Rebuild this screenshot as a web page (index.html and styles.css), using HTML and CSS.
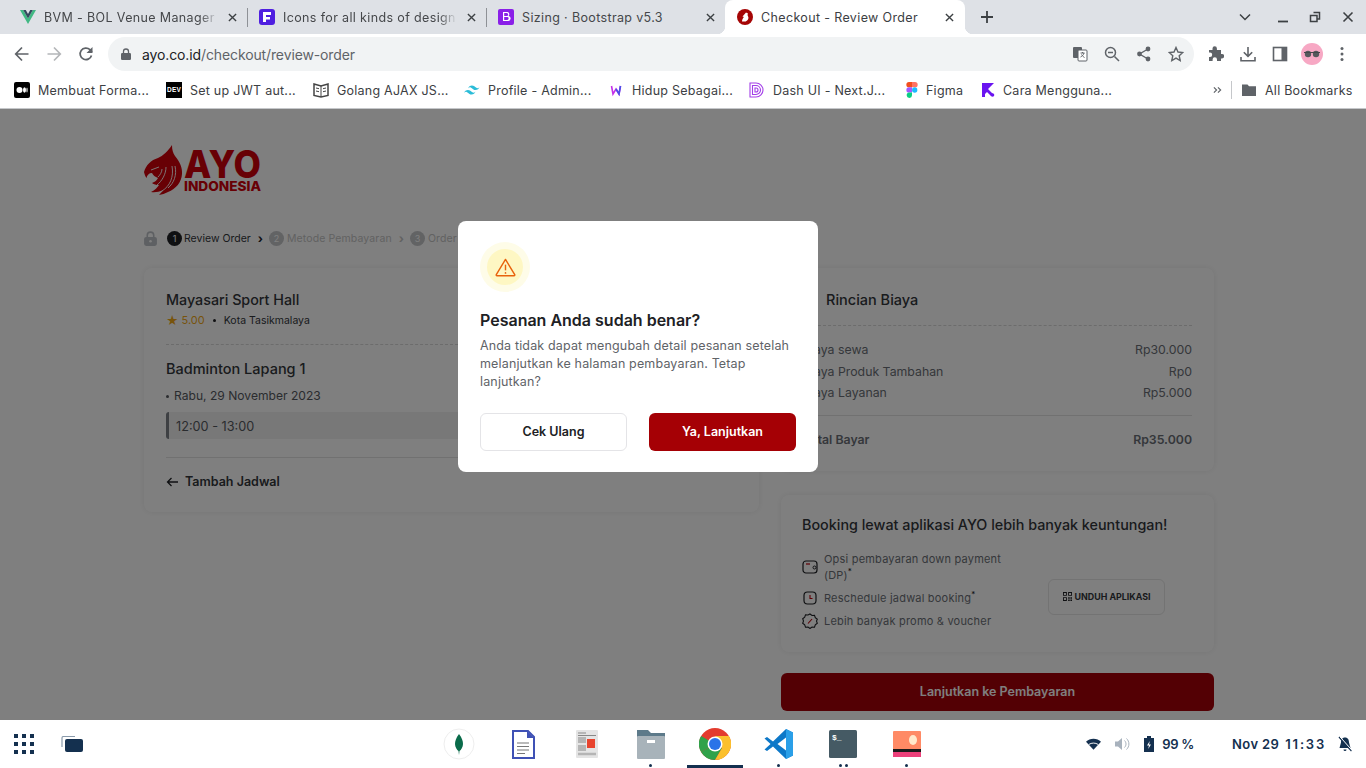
FILE: index.html
```html
<!DOCTYPE html>
<html lang="id">
<head>
<meta charset="utf-8">
<title>Checkout - Review Order</title>
<link rel="stylesheet" href="styles.css">
</head>
<body>
<div class="screen">
  <header class="tabbar">
    <div class="tab">
      <svg class="fav" viewBox="0 0 16 16"><path d="M0 1h3.200L8 9.500 12.800 1H16L8 15z" fill="#41b883"/><path d="M3.200 1h2.600L8 5l2.200-4h2.600L8 9.500z" fill="#35495e"/></svg>
      <span class="tab-title">BVM - BOL Venue Manager</span><svg class="x" viewBox="0 0 10 10"><path d="M1 1l8 8M9 1L1 9" stroke="#3c4043" stroke-width="1.500"/></svg>
    </div>
    <div class="tab sep">
      <svg class="fav" viewBox="0 0 16 16"><rect width="16" height="16" rx="3" fill="#4f1fe0"/><path d="M4 3h8v3H7v2h4v2.600H7V13H4z" fill="#fff"/></svg>
      <span class="tab-title">Icons for all kinds of design</span><svg class="x" viewBox="0 0 10 10"><path d="M1 1l8 8M9 1L1 9" stroke="#3c4043" stroke-width="1.500"/></svg>
    </div>
    <div class="tab sep">
      <svg class="fav" viewBox="0 0 16 16"><rect width="16" height="16" rx="2" fill="#8a1fe8"/><path d="M5 3h4a2.200 2.200 0 0 1 1.500 3.900A2.500 2.500 0 0 1 9.500 12H5zM6.200 4.100v3h2.500a1.500 1.500 0 0 0 0-3zm0 4v2.900h3a1.450 1.450 0 0 0 0-2.900z" fill="#fff"/></svg>
      <span class="tab-title plain">Sizing · Bootstrap v5.3</span><svg class="x" viewBox="0 0 10 10"><path d="M1 1l8 8M9 1L1 9" stroke="#3c4043" stroke-width="1.500"/></svg>
    </div>
    <div class="tab active">
      <svg class="fav" viewBox="0 0 16 16"><circle cx="8" cy="8" r="8" fill="#a50505"/><path d="M5 12.500c0-2 1-3.500 2-4.500L5.500 7.500 9 3.500l2 1-.5 1.500.8 2C12 10 10 12.500 8 12.500z" fill="#fff"/></svg>
      <span class="tab-title plain">Checkout - Review Order</span><svg class="x" viewBox="0 0 10 10"><path d="M1 1l8 8M9 1L1 9" stroke="#3c4043" stroke-width="1.500"/></svg>
    </div>
    <svg class="newtab" viewBox="0 0 14 14"><path d="M7 1v12M1 7h12" stroke="#3c4043" stroke-width="1.800" fill="none"/></svg>
    <div class="win">
      <svg viewBox="0 0 12 12" class="w w1"><path d="M1 3.500l5 5 5-5" stroke="#3c4043" stroke-width="1.500" fill="none"/></svg>
      <svg viewBox="0 0 12 12" class="w w2"><path d="M1 10.500h10" stroke="#3c4043" stroke-width="1.800" fill="none"/></svg>
      <svg viewBox="0 0 12 12" class="w w3"><path d="M4.500 1.500h6V8H8.500M1.500 4.500H8v6H1.500z" stroke="#3c4043" stroke-width="1.500" fill="none"/></svg>
      <svg viewBox="0 0 12 12" class="w w4"><path d="M1.500 1.500l9 9M10.500 1.500l-9 9" stroke="#3c4043" stroke-width="1.600" fill="none"/></svg>
    </div>
  </header>

  <nav class="toolbar">
    <svg class="nav" viewBox="0 0 16 16"><path d="M14.500 8H2M8 1.500L1.700 8 8 14.500" stroke="#5f6368" stroke-width="1.700" fill="none"/></svg>
    <svg class="nav" viewBox="0 0 16 16"><path d="M1.500 8H14M8 1.500L14.300 8 8 14.500" stroke="#b4b6b9" stroke-width="1.700" fill="none"/></svg>
    <svg class="nav" viewBox="0 0 16 16"><path d="M13.500 9.500A5.800 5.800 0 1 1 12 3.700L14 6" stroke="#5f6368" stroke-width="1.700" fill="none"/><path d="M14.500 1v6h-6z" fill="#5f6368"/></svg>
    <div class="omnibox">
      <svg class="lock" viewBox="0 0 10 12"><rect y="5" width="10" height="7" rx="1.200" fill="#5f6368"/><path d="M2.500 5.500V3.500a2.500 2.500 0 0 1 5 0v2" stroke="#5f6368" stroke-width="1.300" fill="none"/></svg>
      <span class="url"><span class="host">ayo.co.id</span>/checkout/review-order</span>
      <span class="omni-icons">
        <svg class="oi" viewBox="0 0 16 16"><rect x="1" y="1" width="9" height="11" rx="1" fill="#5f6368"/><rect x="6" y="4" width="9" height="11" rx="1" fill="#fff" stroke="#5f6368"/><path d="M8.500 7h4M10.500 6v1M12 7c-.5 2-2 3.500-3.500 4M9.500 8.500c.5 1 2 2.500 3 3" stroke="#5f6368" fill="none"/></svg>
        <svg class="oi" viewBox="0 0 16 16"><circle cx="6.500" cy="6.500" r="5" stroke="#5f6368" stroke-width="1.500" fill="none"/><path d="M10.500 10.500L15 15M4 6.500h5" stroke="#5f6368" stroke-width="1.500" fill="none"/></svg>
        <svg class="oi" viewBox="0 0 16 16"><circle cx="12" cy="3" r="2.400" fill="#5f6368"/><circle cx="12" cy="13" r="2.400" fill="#5f6368"/><circle cx="3.500" cy="8" r="2.400" fill="#5f6368"/><path d="M12 3L3.500 8l8.500 5" stroke="#5f6368" stroke-width="1.400" fill="none"/></svg>
        <svg class="oi" viewBox="0 0 16 16"><path d="M8 1.500l2 4.500 4.800.5-3.600 3.200 1 4.800L8 12.100l-4.200 2.400 1-4.800L1.200 6.500 6 6z" stroke="#5f6368" stroke-width="1.400" fill="none"/></svg>
      </span>
    </div>
    <div class="ext">
      <svg class="e" viewBox="0 0 16 16"><path d="M1 5h3.500V3.500a2.200 2.200 0 0 1 4.400 0V5H13v4h1a2.200 2.200 0 0 1 0 4.400h-1V16H9v-1.500a2.200 2.200 0 0 0-4.400 0V16H1v-4h1a2.200 2.200 0 0 0 0-4.400H1z" transform="translate(0 -1)" fill="#5f6368"/></svg>
      <svg class="e" viewBox="0 0 16 16"><path d="M8 1v9M3.800 6.200L8 10.400l4.200-4.200M1 11v3.800h14V11" stroke="#5f6368" stroke-width="1.600" fill="none"/></svg>
      <svg class="e" viewBox="0 0 16 16"><rect x="1.500" y="1.500" width="13" height="13" stroke="#5f6368" stroke-width="1.600" fill="none"/><rect x="9.500" y="1.500" width="5" height="13" fill="#5f6368"/></svg>
      <svg class="avatar" viewBox="0 0 22 22"><circle cx="11" cy="11" r="11" fill="#f7a8c4"/><circle cx="7" cy="11" r="3.200" fill="#55585c"/><circle cx="15" cy="11" r="3.200" fill="#55585c"/><path d="M3 9.500h16" stroke="#45474a"/></svg>
      <svg class="e dots" viewBox="0 0 4 16"><circle cx="2" cy="2.500" r="1.500" fill="#5f6368"/><circle cx="2" cy="8" r="1.500" fill="#5f6368"/><circle cx="2" cy="13.500" r="1.500" fill="#5f6368"/></svg>
    </div>
  </nav>

  <div class="bookmarks">
    <a class="bm m1"><svg class="bi" viewBox="0 0 16 16"><rect width="16" height="16" rx="2" fill="#000"/><circle cx="5.500" cy="8" r="3" fill="#fff"/><ellipse cx="10.500" cy="8" rx="1.500" ry="2.800" fill="#fff"/><ellipse cx="13" cy="8" rx=".6" ry="2.500" fill="#fff"/></svg>Membuat Forma...</a>
    <a class="bm m2"><span class="dev">DEV</span>Set up JWT aut...</a>
    <a class="bm m3"><svg class="bi" viewBox="0 0 16 16"><path d="M1 2l7 2 7-2v11.500L8 15l-7-1.500z" fill="none" stroke="#444" stroke-width="1.500"/><path d="M8 4v11M3 6l3 .7M3 9l3 .7M10 6.700l3-.7M10 9.700l3-.7" stroke="#444"/></svg>Golang AJAX JS...</a>
    <a class="bm m4"><svg class="bi" viewBox="0 0 16 16"><path d="M8 3.500c-2 0-3.300 1-4 3 .8-1 1.700-1.400 2.700-1.100.6.100 1 .6 1.500 1 .8.800 1.600 1.600 3.300 1.600 2 0 3.300-1 4-3-.8 1-1.700 1.400-2.700 1.100-.6-.1-1-.6-1.500-1C10.500 4.300 9.700 3.500 8 3.500zM4 8c-2 0-3.300 1-4 3 .8-1 1.700-1.400 2.700-1.100.6.100 1 .6 1.500 1 .8.800 1.600 1.600 3.300 1.600 2 0 3.300-1 4-3-.8 1-1.700 1.400-2.700 1.100-.6-.1-1-.6-1.500-1C6.500 8.800 5.700 8 4 8z" fill="#2bbcd8"/></svg>Profile - Admin...</a>
    <a class="bm m5"><svg class="bi" viewBox="0 0 16 16"><path d="M3.500 4l1.500 8 3-5 3 5 1.500-8" stroke="#c42fe8" stroke-width="1.600" fill="none"/><path d="M8 7l3 5 1.500-8" stroke="#4a4fe8" stroke-width="1.600" fill="none"/></svg>Hidup Sebagai...</a>
    <a class="bm m6"><svg class="bi" viewBox="0 0 16 16"><path d="M1 1h6a7 7 0 0 1 0 14H1zM3.500 3.500h3.500a4.500 4.500 0 0 1 0 9H3.500zM6 6h1a2 2 0 0 1 0 4H6z" fill="none" stroke="#a33fe8" stroke-width="1.100"/></svg>Dash UI - Next.J...</a>
    <a class="bm m7"><svg class="bi" viewBox="0 0 16 16"><path d="M5 0h3v5.300H5A2.650 2.650 0 0 1 5 0z" fill="#f24e1e"/><path d="M8 0h3a2.650 2.650 0 0 1 0 5.300H8z" fill="#ff7262"/><path d="M5 5.300h3v5.300H5a2.650 2.650 0 0 1 0-5.300z" fill="#a259ff"/><circle cx="10.700" cy="8" r="2.650" fill="#1abcfe"/><path d="M5 10.600h3v2.700a2.650 2.650 0 1 1-3-2.700z" fill="#0acf83"/></svg>Figma</a>
    <a class="bm m8"><svg class="bi" viewBox="0 0 16 16"><path d="M2 1h12L8 7l5 5-2 2-4-4-2 2v3H2z" fill="#6a14f0"/><circle cx="12.500" cy="13" r="1.800" fill="#6a14f0"/></svg>Cara Mengguna...</a>
    <svg class="more" viewBox="0 0 10 8"><path d="M1 1l3 3-3 3M5.500 1l3 3-3 3" stroke="#5f6368" stroke-width="1.300" fill="none"/></svg>
    <span class="bm-sep"></span>
    <a class="bm all"><svg class="bi" viewBox="0 0 16 16"><path d="M1 2.500h5.500l1.500 1.700h7V14H1z" fill="#5f6368"/></svg>All Bookmarks</a>
  </div>

  <main class="page">
    <svg class="logo" viewBox="0 0 118 50" aria-label="AYO Indonesia">
      <path d="M0 27C2 20 7 15 14 13 19 11 24 6 28 0c0 5 1 8 3 11 5 6 7.500 12 7 18-.5 8-6 15-14 18-3 1.500-6 2.500-9 3 2-2 3.500-3.500 4-5-4 2-8 2.500-12 2 4-2 6.500-4.500 8-7-3 0-5-.5-7-2 3-1 5-3 6-5-3-1-5-3-6-5-3 0-5 2-5.500 5C1 31 .5 29 0 27z" fill="#d0000a"/>
      <path d="M7 25l8-3M18 46c8-5 12-14 10-25M24 43c6-5 9-13 7-22M13 40c5-4 9-11 9-18M14 32c2-2 4-5 4-8" stroke="#fff" stroke-width=".9" fill="none"/>
      <text x="40" y="33" class="logo-a" textLength="77" lengthAdjust="spacingAndGlyphs">AYO</text>
      <text x="40" y="46" class="logo-b" textLength="77" lengthAdjust="spacingAndGlyphs">INDONESIA</text>
    </svg>

    <div class="steps">
      <svg class="step-lock" viewBox="0 0 12 14"><rect y="5.500" width="12" height="8.500" rx="2" fill="#bcc0c6"/><path d="M3 6V4a3 3 0 0 1 6 0v2" stroke="#bcc0c6" stroke-width="1.500" fill="none"/><circle cx="6" cy="9.500" r="1.200" fill="#fff"/></svg>
      <span class="step on"><b class="num">1</b>Review Order</span><span class="chev on">›</span>
      <span class="step"><b class="num">2</b>Metode Pembayaran</span><span class="chev">›</span>
      <span class="step"><b class="num">3</b>Order Selesai</span>
    </div>

    <div class="columns">
      <section class="card left">
        <h2 class="venue">Mayasari Sport Hall</h2>
        <div class="meta"><span class="star">★</span><span class="rating">5.00</span><i class="dot"></i><span>Kota Tasikmalaya</span></div>
        <hr class="dash">
        <h3 class="court">Badminton Lapang 1</h3>
        <div class="date"><i class="bullet"></i>Rabu, 29 November 2023</div>
        <div class="slot">12:00 - 13:00</div>
        <hr class="solid">
        <div class="addmore"><svg class="arrow" viewBox="0 0 12 10"><path d="M12 5H1.500M5.500 1L1.500 5l4 4" stroke="#1f2125" stroke-width="1.300" fill="none"/></svg>Tambah Jadwal</div>
      </section>

      <aside class="right">
        <section class="card cost">
          <h2 class="cost-title">Rincian Biaya</h2>
          <hr class="dash first">
          <div class="row"><span>Biaya sewa</span><span>Rp30.000</span></div>
          <div class="row"><span>Biaya Produk Tambahan</span><span>Rp0</span></div>
          <div class="row"><span>Biaya Layanan</span><span>Rp5.000</span></div>
          <hr class="solid second">
          <div class="row total"><span>Total Bayar</span><span>Rp35.000</span></div>
        </section>

        <section class="card promo">
          <h3 class="promo-title">Booking lewat aplikasi AYO lebih banyak keuntungan!</h3>
          <div class="promo-body">
            <ul class="perks">
              <li><svg class="pi" viewBox="0 0 16 16"><rect x="1" y="2" width="14" height="12" rx="3" fill="none" stroke="#1f2125" stroke-width="1.200"/><path d="M4 5h4" stroke="#c0000a" stroke-width="1.200"/><circle cx="12.500" cy="8.500" r="1.500" fill="none" stroke="#1f2125"/></svg><span>Opsi pembayaran down payment (DP)<sup>*</sup></span></li>
              <li><svg class="pi" viewBox="0 0 16 16"><rect x="2" y="2" width="12" height="12" rx="3.500" fill="none" stroke="#1f2125" stroke-width="1.200"/><path d="M8 5v3.500h2.500" stroke="#c0000a" stroke-width="1.100" fill="none"/></svg><span>Reschedule jadwal booking<sup>*</sup></span></li>
              <li><svg class="pi" viewBox="0 0 16 16"><path d="M8 1l2 1.500 2.500-.2.800 2.400 2 1.500L14.500 8l.8 2.300-2 1.500-.8 2.400-2.500-.2L8 15.500 6 14l-2.500.2-.8-2.400-2-1.500L1.500 8 .7 5.700l2-1.500.8-2.400L6 2z" fill="none" stroke="#1f2125" stroke-width="1.100"/><path d="M10 6l-4 4.500" stroke="#c0000a" stroke-width="1.100"/></svg><span>Lebih banyak promo &amp; voucher</span></li>
            </ul>
            <div class="download"><svg class="qr" viewBox="0 0 10 10"><path d="M0 0h4.300v4.300H0zM1 1v2.300h2.300V1zM5.700 0H10v4.300H5.700zM6.700 1v2.300H9V1zM0 5.700h4.300V10H0zM1 6.700V9h2.300V6.700zM5.700 5.700h1.800v1.800H5.700zM8.200 5.700H10v1.800H8.200zM5.700 8.200h1.800V10H5.700zM8.200 8.200H10V10H8.200z" fill="#1f2125" fill-rule="evenodd"/></svg>UNDUH APLIKASI</div>
          </div>
        </section>

        <button class="pay">Lanjutkan ke Pembayaran</button>
      </aside>
    </div>

    <div class="overlay">
      <div class="modal">
        <div class="halo"><div class="halo-in"><svg class="warn" viewBox="0 0 22 20"><path d="M11 1.500L1.300 17.500a.8.800 0 0 0 .7 1.200h18a.8.800 0 0 0 .7-1.200z" fill="none" stroke="#e8620c" stroke-width="1.500" stroke-linejoin="round"/><path d="M11 7v6" stroke="#e8620c" stroke-width="1.500"/><circle cx="11" cy="15.700" r=".9" fill="#e8620c"/></svg></div></div>
        <h2 class="modal-title">Pesanan Anda sudah benar?</h2>
        <p class="modal-text">Anda tidak dapat mengubah detail pesanan setelah melanjutkan ke halaman pembayaran. Tetap lanjutkan?</p>
        <div class="modal-actions">
          <button class="btn ghost">Cek Ulang</button>
          <button class="btn primary">Ya, Lanjutkan</button>
        </div>
      </div>
    </div>
  </main>

  <footer class="shelf">
    <div class="launch">
      <svg class="grid9" viewBox="0 0 20 20"><g fill="#14304f"><rect width="4" height="4"/><rect x="8" width="4" height="4"/><rect x="16" width="4" height="4"/><rect y="8" width="4" height="4"/><rect x="8" y="8" width="4" height="4"/><rect x="16" y="8" width="4" height="4"/><rect y="16" width="4" height="4"/><rect x="8" y="16" width="4" height="4"/><rect x="16" y="16" width="4" height="4"/></g></svg>
      <svg class="overview" viewBox="0 0 22 16"><path d="M1 11V2a1.500 1.500 0 0 1 1.500-1.500H14" stroke="#8a9aab" fill="none" stroke-width="1.200"/><rect x="4" y="3" width="18" height="13" rx="2" fill="#14304f"/></svg>
    </div>
    <div class="apps">
      <span class="app"><svg class="ai" viewBox="0 0 32 32"><circle cx="16" cy="16" r="15" fill="#fff" stroke="#eee"/><path d="M16 6c3 4 4 7 4 10s-2 6-3.500 7L16 27l-.5-4C14 22 12 19 12 16s1-6 4-10z" fill="#0a6b4a"/></svg></span>
      <span class="app"><svg class="ai" viewBox="0 0 32 32"><path d="M6 3h15l6 6v21H6z" fill="#fff" stroke="#3f51b5" stroke-width="2"/><path d="M20 3l7 7h-7z" fill="#3f51b5"/><path d="M10 15h12M10 18.500h12M10 22h12M10 25.500h8" stroke="#777" stroke-width="1.200"/></svg></span>
      <span class="app"><svg class="ai" viewBox="0 0 32 32"><rect x="5" y="2" width="22" height="28" rx="1" fill="#e4e4e4"/><path d="M7 5h8M7 7.500h18" stroke="#888"/><rect x="7" y="9" width="8" height="6" fill="#b5b5b5"/><rect x="16" y="11" width="8" height="9" fill="#e8442e"/><rect x="7" y="17" width="8" height="6" fill="#b5b5b5"/><path d="M7 26h18" stroke="#b5b5b5" stroke-width="2.500"/></svg></span>
      <span class="app"><svg class="ai" viewBox="0 0 32 32"><path d="M2 2h11l3 3h14v5H2z" fill="#5d7a8a"/><rect x="2" y="8" width="28" height="23" rx="1" fill="#a8b3ba"/><rect x="12" y="12" width="8" height="3" fill="#fff"/></svg><i class="pip"></i></span>
      <span class="app current"><svg class="ai" viewBox="0 0 32 32"><circle cx="16" cy="16" r="16" fill="#e33b2e"/><path d="M16 16L2.100 24A16 16 0 0 0 16 32l7-12z" fill="#2fa24a"/><path d="M2.100 8A16 16 0 0 0 2.100 24L9 20 16 16z" fill="#2fa24a"/><path d="M16 8h13.900A16 16 0 0 1 16 32l7-12z" fill="#fbc02d"/><circle cx="16" cy="16" r="7.500" fill="#fff"/><circle cx="16" cy="16" r="6" fill="#2a73e8"/></svg></span>
      <span class="app"><svg class="ai" viewBox="0 0 32 32"><path d="M23 1l7 3.400v23.200L23 31 10 18.500 4 23l-2.500-1.500 6-5.500-6-5.500L4 9l6 4.500z" fill="#0d78c8"/><path d="M23 1l7 3.400v23.200L23 31z" fill="#2a9fe8"/><path d="M23 9.500L14.500 16l8.500 6.500z" fill="#fff"/></svg><i class="pip"></i></span>
      <span class="app"><svg class="ai" viewBox="0 0 32 32"><rect x="2" y="2" width="28" height="28" rx="1.500" fill="#455a64"/><text x="5" y="12" class="term">$_</text></svg><i class="pip p-a"></i><i class="pip p-b"></i></span>
      <span class="app"><svg class="ai" viewBox="0 0 32 32"><rect x="2" y="3" width="28" height="26" rx="1" fill="#ff8a65"/><rect x="2" y="23" width="28" height="6" fill="#ec407a"/><rect x="2" y="21" width="28" height="3" fill="#1a1a1a"/><ellipse cx="22" cy="12" rx="4" ry="5" fill="#ffe9cc"/></svg><i class="pip"></i></span>
    </div>
    <div class="tray">
      <svg class="t wifi" viewBox="0 0 16 12"><path d="M0 3.500C4-.8 12-.8 16 3.500L8 12z" fill="#14304f"/><path d="M3 6.500c3-2 7-2 10 0" stroke="#fff" fill="none"/></svg>
      <svg class="t vol" viewBox="0 0 16 16"><path d="M1 5.500h3L8 2v12l-4-3.500H1z" fill="#a8b2bd"/><path d="M10.500 4.500c2 2 2 5 0 7M12.500 2.500c3.200 3 3.200 8 0 11" stroke="#a8b2bd" fill="none"/></svg>
      <svg class="t bat" viewBox="0 0 10 16"><path d="M3 0h4v2h3v14H0V2h3z" fill="#14304f"/><path d="M5.800 5L3 9.500h2L4.200 13 7 8.500H5z" fill="#fff"/></svg>
      <span class="pct">99 %</span>
      <span class="date-s">Nov 29</span>
      <span class="clock">11:33</span>
      <svg class="t bell" viewBox="0 0 16 16"><path d="M8 1.500c-3 0-4 2.500-4 5L2.500 12h11L12 6.500c0-2.500-1-5-4-5zM6.500 13.500a1.500 1.500 0 0 0 3 0z" fill="#14304f"/><path d="M2 1l12.500 14" stroke="#14304f" stroke-width="1.300"/><path d="M3.200 1l12.500 14" stroke="#fff"/></svg>
    </div>
  </footer>
</div>
</body>
</html>
```
FILE: styles.css
```css
* { box-sizing: border-box; }
html, body { margin: 0; padding: 0; }
body { font-family: Inter, "Noto Sans", sans-serif; background: #fff; overflow: hidden; }
.screen { width: 1366px; height: 768px; display: flex; flex-direction: column; overflow: hidden; }
h2, h3, p, ul { margin: 0; padding: 0; }
hr { margin: 0; border: 0; }
svg { display: block; flex: none; }

/* tab strip */
.tabbar { height: 34px; background: #dee1e6; display: flex; align-items: center; padding-left: 8px; flex: none; }
.tab { width: 239px; height: 34px; padding: 0 10px 0 12px; display: flex; align-items: center; font-size: 12.500px; letter-spacing: .36px; color: #45474a; position: relative; white-space: nowrap; }
.tab.sep::before { content: ""; position: absolute; left: 0; top: 8px; height: 19px; width: 1px; background: #8e9196; }
.fav { width: 16px; height: 16px; margin-right: 8px; }
.tab-title { flex: 1; min-width: 0; -webkit-mask-image: linear-gradient(90deg, #000 calc(100% - 24px), transparent calc(100% - 6px)); mask-image: linear-gradient(90deg, #000 calc(100% - 24px), transparent calc(100% - 6px)); }
.tab-title.plain { -webkit-mask-image: none; mask-image: none; }
.x { width: 9px; height: 9px; margin-left: 4px; }
.tab.active { background: #fff; border-radius: 8px 8px 0 0; width: 240px; color: #3c4043; padding-right: 11px; }
.tab.active::before, .tab.active::after { content: ""; position: absolute; bottom: 0; width: 8px; height: 8px; }
.tab.active::before { left: -8px; background: radial-gradient(circle at 0 0, transparent 8px, #fff 8.500px); }
.tab.active::after { right: -8px; background: radial-gradient(circle at 100% 0, transparent 8px, #fff 8.500px); }
.newtab { width: 14px; height: 14px; margin-left: 15px; }
.win { margin-left: auto; display: flex; align-items: center; padding-right: 12px; }
.w { width: 12px; height: 12px; }
.w2 { margin-left: 26px; }
.w3 { margin-left: 20px; }
.w4 { margin-left: 21px; }

/* toolbar */
.toolbar { height: 40px; background: #fff; display: flex; align-items: center; padding: 0 14px; flex: none; }
.nav { width: 16px; height: 16px; margin-right: 16px; }
.nav:nth-child(3) { margin-right: 14px; }
.omnibox { width: 1086px; height: 34px; background: #f1f3f4; border-radius: 17px; display: flex; align-items: center; padding: 0 10px 0 13px; }
.lock { width: 10px; height: 12px; margin-right: 11px; }
.url { font-size: 14px; color: #5f6368; letter-spacing: -.12px; }
.host { color: #202124; }
.omni-icons { margin-left: auto; display: flex; align-items: center; gap: 16px; }
.oi { width: 16px; height: 16px; }
.ext { display: flex; align-items: center; margin-left: 14px; }
.e { width: 16px; height: 16px; margin-right: 16px; }
.avatar { width: 22px; height: 22px; margin: 0 17px 0 -3px; }
.dots { width: 4px; margin-right: 0; }

/* bookmarks */
.bookmarks { height: 35px; background: #fff; border-bottom: 1px solid #c5c7ca; display: flex; align-items: center; padding: 0 0 2px 14px; font-size: 12.500px; letter-spacing: .24px; color: #3c4043; flex: none; white-space: nowrap; }
.bm { display: flex; align-items: center; }
.bi { width: 16px; height: 16px; margin-right: 8px; }
.dev { width: 16px; height: 16px; margin-right: 8px; background: #000; color: #fff; font: 700 6.500px/16px "Liberation Sans", sans-serif; text-align: center; }
.m1 { width: 152px; }
.m2 { width: 147px; }
.m3 { width: 151px; }
.m4 { width: 144px; }
.m5 { width: 141px; }
.m6 { width: 155px; }
.m7 { width: 76px; }
.m7 .bi { margin-right: 6px; }
.m8 { width: 233px; }
.m8 .bi { margin-right: 7px; }
.more { width: 9px; height: 8px; margin-right: 4px; }
.bm-sep { width: 1px; height: 18px; background: #c5c7ca; margin: 0 9px 0 5px; }

/* page, dimmed by the overlay */
.page { flex: 1; min-height: 0; position: relative; background: #fff; padding: 36px 152px 0 144px; overflow: hidden; }
.logo { width: 118px; height: 50px; overflow: visible; }
.logo-a { font: 800 38px/1 Inter, sans-serif; fill: #d0000a; }
.logo-b { font: 800 13px/1 Inter, sans-serif; fill: #d0000a; }
.steps { margin-top: 35px; height: 16px; display: flex; align-items: center; font-size: 10.500px; color: #c4c4c4; white-space: nowrap; }
.step-lock { width: 13px; height: 15px; margin-right: 10px; }
.step { display: flex; align-items: center; letter-spacing: .12px; }
.step.on { color: #33363b; letter-spacing: 0; }
.num { width: 15px; height: 15px; border-radius: 50%; background: #c4c6c9; color: #fff; font-size: 9px; font-weight: 400; line-height: 15px; text-align: center; margin-right: 3px; }
.on .num { background: #1f2125; margin-right: 2px; }
.chev { margin: 0 6px 0 7px; font-size: 12px; font-weight: 700; }
.chev.on { color: #202124; }

.columns { display: flex; gap: 22px; margin-top: 22px; align-items: flex-start; }
.card { background: #fff; border-radius: 8px; box-shadow: 0 0 6px rgba(0, 0, 0, .08); }
.left { width: 615px; height: 244px; padding: 22px; color: #33363b; }
.venue { font-size: 14.300px; line-height: 20px; font-weight: 500; }
.meta { display: flex; align-items: center; font-size: 10.500px; margin-top: 3px; height: 14px; }
.star { color: #f0a818; font-size: 12px; margin-right: 3px; }
.rating { color: #f0a818; font-size: 11px; margin-right: 8px; }
.dot { width: 3px; height: 3px; background: #202124; border-radius: 50%; margin-right: 8px; }
.dash { border-top: 1px dashed #d8d8d8; margin-top: 17px; }
.court { font-size: 14.500px; line-height: 20px; font-weight: 500; margin-top: 14px; }
.date { display: flex; align-items: center; font-size: 12.100px; line-height: 18px; margin-top: 8px; color: #55585e; }
.bullet { width: 3px; height: 3px; border-radius: 50%; background: #55585e; margin-right: 5px; }
.slot { height: 27px; margin-top: 7px; background: #f0f0f0; border-left: 3px solid #7c8087; border-radius: 3px; padding-left: 7px; font-size: 12.700px; line-height: 29px; color: #55585e; }
.solid { border-top: 1px solid #e3e3e3; }
.left .solid { margin-top: 18px; }
.addmore { display: flex; align-items: center; margin-top: 16px; font-size: 12.500px; font-weight: 600; line-height: 16px; }
.arrow { width: 12px; height: 10px; margin-right: 7px; }

.right { width: 433px; display: flex; flex-direction: column; }
.cost { height: 203px; padding: 22px 22px 0; color: #6b6f76; font-size: 12.300px; }
.cost-title { font-size: 14.500px; font-weight: 500; line-height: 20px; color: #33363b; margin-left: 23px; }
.dash.first { margin-top: 15px; margin-bottom: 16px; }
.row { display: flex; justify-content: space-between; line-height: 16px; margin-bottom: 5.500px; }
.second { margin-top: 14px; margin-bottom: 16px; }
.total { font-weight: 600; }

.promo { margin-top: 24px; height: 157px; padding: 20px 21px 0; }
.promo-title { font-size: 14.350px; line-height: 20px; font-weight: 500; color: #33363b; white-space: nowrap; }
.promo-body { display: flex; align-items: center; margin-top: 16px; }
.perks { list-style: none; width: 212px; margin-right: 34px; font-size: 11px; line-height: 16px; color: #6b6f76; letter-spacing: .2px; }
.perks li { display: flex; align-items: center; margin-bottom: 7px; }
.pi { width: 16px; height: 16px; margin-right: 6px; }
sup { font-size: 8px; line-height: 0; color: #202124; }
.download { width: 117px; height: 36px; margin-top: 6px; border: 1px solid #e6e6e6; border-radius: 6px; display: flex; align-items: center; justify-content: center; font-size: 8.900px; font-weight: 700; color: #33363b; white-space: nowrap; }
.qr { width: 9px; height: 9px; margin-right: 3px; }
.pay { margin-top: 21px; padding-bottom: 3px; width: 433px; height: 38px; background: #a60008; color: #fff; border: 0; border-radius: 6px; font: 600 12.500px Inter, sans-serif; }

/* overlay + dialog */
.overlay { position: absolute; inset: 0; background: rgba(0, 0, 0, .5); display: flex; justify-content: center; align-items: flex-start; padding-top: 112px; }
.modal { width: 360px; height: 251px; background: #fff; border-radius: 8px; padding: 21px 22px 0 22px; margin-left: -90px; }
.halo { width: 50px; height: 50px; border-radius: 50%; background: #fefce8; display: flex; align-items: center; justify-content: center; }
.halo-in { width: 36px; height: 36px; border-radius: 50%; background: #fef7c3; display: flex; align-items: center; justify-content: center; }
.warn { width: 21px; height: 19px; }
.modal-title { margin-top: 16px; font-size: 16px; line-height: 24px; font-weight: 600; color: #202124; }
.modal-text { margin-top: 5px; font-size: 12.500px; line-height: 18px; color: #5f6368; letter-spacing: .15px; }
.modal-actions { display: flex; gap: 22px; margin-top: 22px; }
.btn { width: 147px; height: 38px; padding-bottom: 3px; border-radius: 6px; font: 600 12.500px Inter, sans-serif; }
.ghost { background: #fff; border: 1px solid #e4e4e7; color: #202124; }
.primary { background: #a50005; border: 0; color: #fff; }

/* OS shelf */
.shelf { height: 48px; background: #fff; display: flex; align-items: center; flex: none; color: #14304f; }
.launch { display: flex; align-items: center; padding-left: 14px; width: 427px; }
.grid9 { width: 20px; height: 20px; margin-right: 27px; }
.overview { width: 22px; height: 16px; }
.apps { display: flex; align-items: center; height: 48px; }
.app { width: 64px; height: 48px; position: relative; display: flex; justify-content: center; align-items: center; }
.ai { width: 32px; height: 32px; }
.pip { position: absolute; bottom: 1px; left: 30px; width: 3px; height: 3px; border-radius: 50%; background: #14304f; }
.p-a { left: 28px; }
.p-b { left: 34px; }
.current::after { content: ""; position: absolute; bottom: 0; left: 4px; right: 4px; height: 3px; background: #14304f; }
.term { font: 700 8px "Liberation Mono", monospace; fill: #fff; }
.tray { margin-left: auto; display: flex; align-items: center; padding-right: 13px; font-weight: 600; font-size: 13px; white-space: nowrap; }
.t { width: 16px; height: 16px; }
.wifi { width: 15px; height: 12px; margin-right: 13px; }
.vol { margin-right: 14px; }
.bat { width: 10px; margin-right: 8px; }
.pct { margin-right: 38px; letter-spacing: -.3px; }
.date-s { margin-right: 6px; letter-spacing: .4px; }
.clock { margin-right: 11px; letter-spacing: 1.800px; }
```
